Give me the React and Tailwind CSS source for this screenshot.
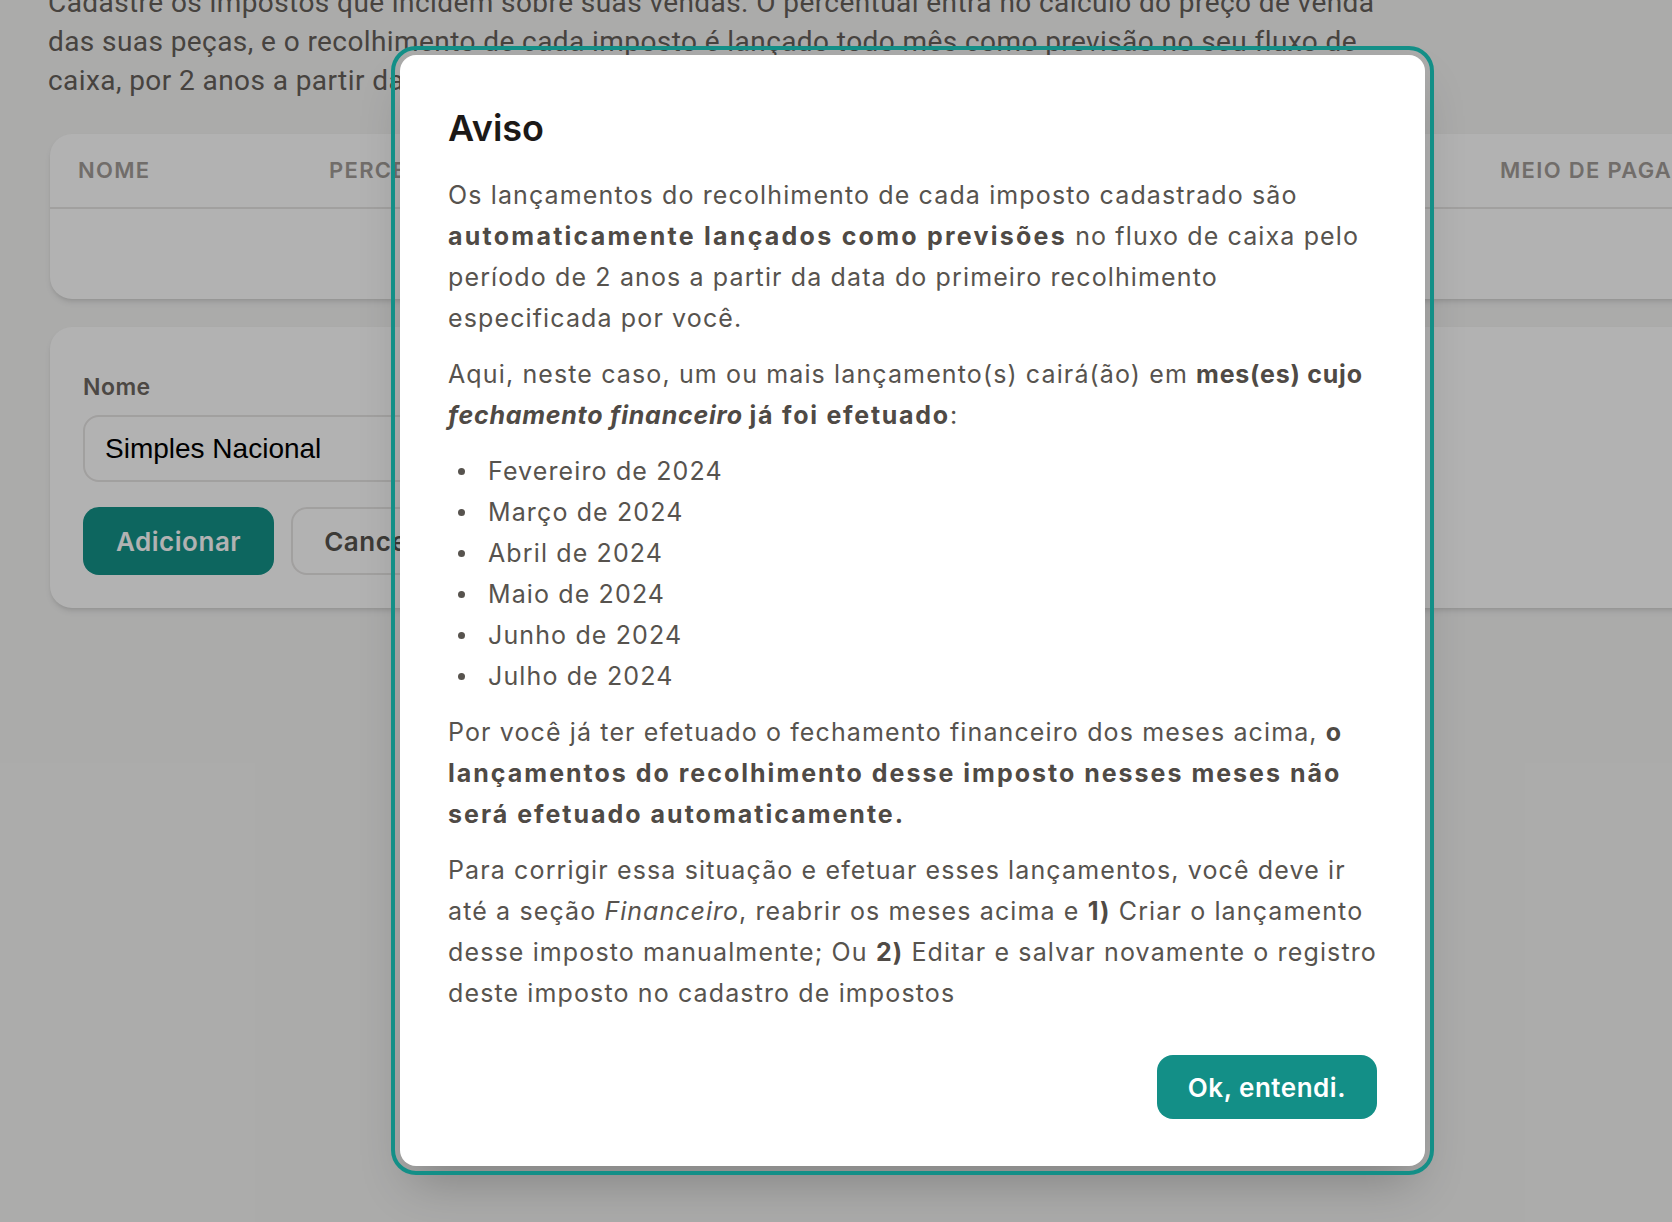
import React from "react";

const meses = [
	"Fevereiro de 2024",
	"Março de 2024",
	"Abril de 2024",
	"Maio de 2024",
	"Junho de 2024",
	"Julho de 2024",
];

const colunas = [
	{ label: "Nome", w: "w-[251px]" },
	{ label: "Percentual", w: "w-[420px]" },
	{ label: "Primeiro recolhimento", w: "w-[751px]" },
	{ label: "Meio de pagamento", w: "w-[320px]" },
];

const App = () => {
	return (
		<div className="relative h-screen w-full overflow-hidden bg-[#f5f5f4] font-['Inter',sans-serif]">
			{/* page behind the modal */}
			<div className="-mt-[17px] w-[1900px] px-[48px]">
				<p className="max-w-[1335px] font-['Roboto',sans-serif] text-[28px] leading-[39px] tracking-[0.015em] text-[#66605b]">
					Cadastre os impostos que incidem sobre suas vendas. O percentual entra no cálculo do preço de venda
					das suas peças, e o recolhimento de cada imposto é lançado todo mês como previsão no seu fluxo de
					caixa, por 2 anos a partir da data do primeiro recolhimento informado.
				</p>

				{/* table */}
				<div className="ml-[2px] mt-[34px] w-[1760px] rounded-[22px] bg-white shadow-md">
					<div className="flex h-[75px] items-center border-b-2 border-stone-200 px-[28px]">
						{colunas.map((c) => (
							<div
								key={c.label}
								className={`${c.w} shrink-0 text-[22px] font-semibold uppercase tracking-[0.06em] text-[#a39d98]`}
							>
								{c.label}
							</div>
						))}
					</div>
					<div className="h-[90px]" />
				</div>

				{/* form */}
				<div className="ml-[2px] mt-[28px] w-[1760px] rounded-[22px] bg-white px-[33px] pb-[33px] pt-[45px] shadow-md">
					<label className="block text-[23px] font-semibold leading-[30px] tracking-[0.02em] text-[#6e6762]">
						Nome
					</label>
					<div className="mt-[13px] flex h-[67px] w-[760px] items-center rounded-2xl border-2 border-stone-200 px-[20px]">
						<span className="font-['Liberation_Sans',sans-serif] text-[28px] text-black">Simples Nacional</span>
					</div>
					<div className="mt-[25px] flex gap-[17px]">
						<button className="h-[68px] rounded-2xl bg-[#149289] px-[33px] text-[26px] font-semibold tracking-[0.02em] text-white">
							Adicionar
						</button>
						<button className="h-[68px] rounded-2xl border-2 border-stone-200 bg-white px-[31px] text-[26px] font-semibold tracking-[0.02em] text-[#57534e]">
							Cancelar
						</button>
					</div>
				</div>
			</div>

			{/* overlay */}
			<div className="absolute inset-0 bg-black/30" />

			{/* modal */}
			<div className="absolute left-[400px] top-[55px] w-[1025px] rounded-2xl bg-white px-[48px] pb-[47px] pt-[51px] shadow-2xl outline-4 outline-offset-[5px] outline-[#138f87]">
				<h2 className="text-[36px] font-semibold leading-[44px] text-[#1c1917]">Aviso</h2>
				<div className="mt-[25px] text-[25px] leading-[41px] tracking-[0.045em] text-[#57534e]">
					<p>
						Os lançamentos do recolhimento de cada imposto cadastrado são{" "}
						<strong className="font-bold tracking-[0.09em] text-[#4f4a45]">
							automaticamente lançados como previsões
						</strong>{" "}
						no fluxo de caixa pelo período de 2 anos a partir da data do primeiro recolhimento especificada por
						você.
					</p>
					<p className="mt-[15px]">
						Aqui, neste caso, um ou mais lançamento(s) cairá(ão) em{" "}
						<strong className="font-bold tracking-[0.03em] text-[#4f4a45]">
							mes(es) cujo <em className="tracking-[0.03em]">fechamento financeiro</em>{" "}
							<span className="tracking-[0.07em]">já foi efetuado</span>
						</strong>
						:
					</p>
					<ul className="mt-[15px]">
						{meses.map((m) => (
							<li key={m} className="flex items-center gap-[23px] pl-[10px]">
								<span className="h-[7px] w-[7px] shrink-0 rounded-full bg-[#57534e]" />
								<span>{m}</span>
							</li>
						))}
					</ul>
					<p className="mt-[15px]">
						Por você já ter efetuado o fechamento financeiro dos meses acima,{" "}
						<strong className="font-bold tracking-[0.08em] text-[#4f4a45]">
							o lançamentos do recolhimento desse imposto nesses meses não será efetuado automaticamente.
						</strong>
					</p>
					<p className="mt-[15px]">
						Para corrigir essa situação e efetuar esses lançamentos, você deve ir até a seção{" "}
						<em className="tracking-[0.04em]">Financeiro</em>, reabrir os meses acima e{" "}
						<strong className="font-bold text-[#4f4a45]">1)</strong> Criar o lançamento desse imposto
						manualmente; Ou <strong className="font-bold text-[#4f4a45]">2)</strong> Editar e salvar novamente
						o registro deste imposto no cadastro de impostos
					</p>
				</div>
				<div className="mt-[41px] flex justify-end">
					<button className="h-[64px] rounded-2xl bg-[#138f87] px-[31px] text-[26px] font-semibold tracking-[0.02em] text-white">
						Ok, entendi.
					</button>
				</div>
			</div>
		</div>
	);
};

export default App;
